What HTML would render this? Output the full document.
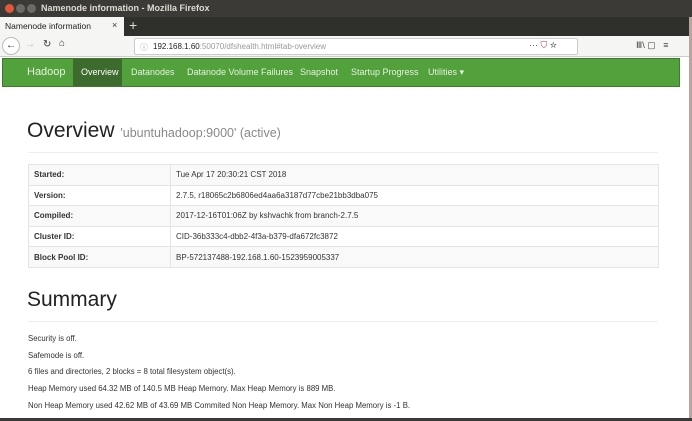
<!DOCTYPE html><html><head><style>
*{margin:0;padding:0;box-sizing:border-box}
body{width:692px;height:421px;overflow:hidden;position:relative;background:#fff;font-family:"Liberation Sans",sans-serif;}
.a{position:absolute;white-space:nowrap}
.n{font-size:9px;color:#e6f2de;top:67px}
td{font-size:8px;color:#333;padding:0 5px;height:20.6px;border:1px solid #e4e4e4}
tr:nth-child(odd) td{background:#f9f9f9}
td:first-child{font-weight:bold;width:142px}
.s{font-size:7.8px;color:#333;left:28px}
</style></head><body>
<div class="a" style="left:0;top:0;width:692px;height:17px;background:#3b3a36"></div>
<div class="a" style="left:5px;top:4px;width:9px;height:9px;border-radius:50%;background:#e0573a"></div>
<div class="a" style="left:16px;top:4px;width:9px;height:9px;border-radius:50%;background:#6b6a65"></div>
<div class="a" style="left:27px;top:4px;width:9px;height:9px;border-radius:50%;background:#6b6a65"></div>
<div class="a" style="left:41px;top:3px;font-size:9px;font-weight:bold;color:#dfdbd2">Namenode information - Mozilla Firefox</div>
<div class="a" style="left:0;top:17px;width:692px;height:19px;background:#2f2f2c"></div>
<div class="a" style="left:0;top:17px;width:124px;height:19px;background:#f5f5f4"></div>
<div class="a" style="left:5px;top:21px;font-size:8.5px;color:#222">Namenode information</div>
<div class="a" style="left:112px;top:20px;font-size:9px;color:#333">×</div>
<div class="a" style="left:129px;top:17px;font-size:14px;color:#ddd">+</div>
<div class="a" style="left:0;top:36px;width:692px;height:21px;background:#f5f5f4;border-bottom:1px solid #ccc"></div>
<div class="a" style="left:2px;top:37px;width:18px;height:18px;border-radius:50%;border:1px solid #bbb;background:#fff;font-size:10px;text-align:center;line-height:16px;color:#333">←</div>
<div class="a" style="left:25px;top:39px;font-size:10px;color:#bbb">→</div>
<div class="a" style="left:43px;top:39px;font-size:10px;color:#333">↻</div>
<div class="a" style="left:59px;top:38px;font-size:10px;color:#333">⌂</div>
<div class="a" style="left:134px;top:38px;width:444px;height:17px;background:#fff;border:1px solid #ccc;border-radius:2px"></div>
<div class="a" style="left:140px;top:42px;font-size:8px;color:#999">ⓘ</div>
<div class="a" style="left:153px;top:42px;font-size:8px;color:#222">192.168.1.60<span style="color:#999">:50070/dfshealth.html#tab-overview</span></div>
<div class="a" style="left:529px;top:40px;font-size:9px;color:#555">··· <span style="color:#c33">⛉</span> ☆</div>
<div class="a" style="left:636px;top:40px;font-size:9px;color:#444">Ⅲ\ ▢ &nbsp; ≡</div>
<div class="a" style="left:2px;top:58px;width:678px;height:29px;background:#53a13d;border:1px solid #3d7a2c"></div>
<div class="a" style="left:73px;top:59px;width:49px;height:27px;background:#3d6a2d"></div>
<div class="a" style="left:27px;top:66px;font-size:11px;color:#e6f2de">Hadoop</div>
<div class="a n" style="left:81px;color:#fff">Overview</div>
<div class="a n" style="left:131px">Datanodes</div>
<div class="a n" style="left:187px">Datanode Volume Failures</div>
<div class="a n" style="left:300px">Snapshot</div>
<div class="a n" style="left:351px">Startup Progress</div>
<div class="a n" style="left:428px">Utilities ▾</div>
<div class="a" style="left:27px;top:119px;font-size:21px;color:#222">Overview <span style="font-size:12.5px;color:#888">'ubuntuhadoop:9000' (active)</span></div>
<div class="a" style="left:28px;top:152px;width:630px;height:1px;background:#eee"></div>
<table class="a" style="left:28px;top:164px;width:631px;border-collapse:collapse">
<tr><td>Started:</td><td>Tue Apr 17 20:30:21 CST 2018</td></tr>
<tr><td>Version:</td><td>2.7.5, r18065c2b6806ed4aa6a3187d77cbe21bb3dba075</td></tr>
<tr><td>Compiled:</td><td>2017-12-16T01:06Z by kshvachk from branch-2.7.5</td></tr>
<tr><td>Cluster ID:</td><td>CID-36b333c4-dbb2-4f3a-b379-dfa672fc3872</td></tr>
<tr><td>Block Pool ID:</td><td>BP-572137488-192.168.1.60-1523959005337</td></tr>
</table>
<div class="a" style="left:27px;top:288px;font-size:21px;color:#222">Summary</div>
<div class="a" style="left:28px;top:321px;width:630px;height:1px;background:#eee"></div>
<div class="a s" style="top:334px">Security is off.</div>
<div class="a s" style="top:351px">Safemode is off.</div>
<div class="a s" style="top:367px">6 files and directories, 2 blocks = 8 total filesystem object(s).</div>
<div class="a s" style="top:384px">Heap Memory used 64.32 MB of 140.5 MB Heap Memory. Max Heap Memory is 889 MB.</div>
<div class="a s" style="top:401px">Non Heap Memory used 42.62 MB of 43.69 MB Commited Non Heap Memory. Max Non Heap Memory is -1 B.</div>
<div class="a" style="left:689px;top:17px;width:3px;height:404px;background:#b9a5a0"></div>
<div class="a" style="left:0;top:418px;width:692px;height:3px;background:#3b3a36"></div>
</body></html>
